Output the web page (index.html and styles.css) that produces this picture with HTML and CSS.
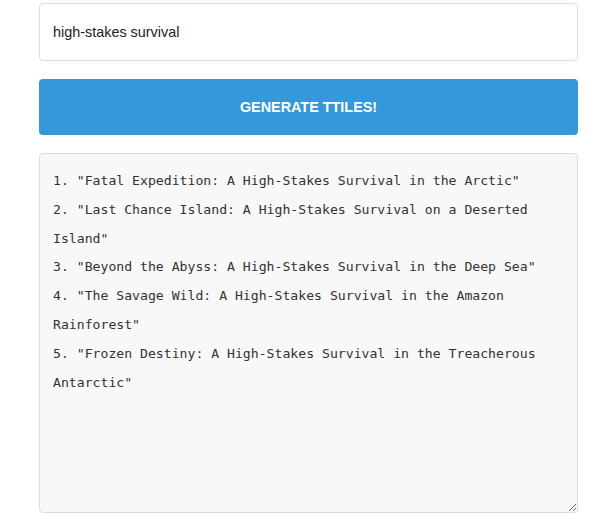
FILE: index.html
```html
<!DOCTYPE html>
<html lang="en">
<head>
  <meta charset="UTF-8" />
  <title>Title Generator</title>
  <link rel="stylesheet" href="styles.css">
</head>
<body>
  <div class="wrap">
    <input type="text" class="topic" value="high-stakes survival" />
    <button class="generate">Generate Ttiles!</button>
    <textarea class="results" readonly>1. "Fatal Expedition: A High-Stakes Survival in the Arctic"
2. "Last Chance Island: A High-Stakes Survival on a Deserted Island"
3. "Beyond the Abyss: A High-Stakes Survival in the Deep Sea"
4. "The Savage Wild: A High-Stakes Survival in the Amazon Rainforest"
5. "Frozen Destiny: A High-Stakes Survival in the Treacherous Antarctic"</textarea>
  </div>
</body>
</html>
```

FILE: styles.css
```css
body {
  margin: 0;
  background-color: #ffffff;
  font-family: "Liberation Sans", Arial, sans-serif;
}
.wrap {
  display: flex;
  flex-direction: column;
  gap: 18px;
  width: 539px;
  padding: 3px 0 0 39px;
}
.topic {
  box-sizing: border-box;
  width: 100%;
  height: 58px;
  padding: 0 13px;
  border: 1px solid #dddddd;
  border-radius: 4px;
  font-family: "Liberation Sans", Arial, sans-serif;
  font-size: 14.4px;
  color: #222222;
  outline: none;
}
.generate {
  box-sizing: border-box;
  width: 100%;
  height: 56px;
  background-color: #3498db;
  color: #ffffff;
  border: none;
  border-radius: 4px;
  font-family: "Liberation Sans", Arial, sans-serif;
  font-size: 14.4px;
  font-weight: bold;
  text-transform: uppercase;
  cursor: pointer;
}
.results {
  box-sizing: border-box;
  width: 100%;
  height: 360px;
  margin: 0;
  padding: 13px 13px;
  background-color: #f8f8f8;
  border: 1px solid #dddddd;
  border-radius: 4px;
  font-family: "DejaVu Sans Mono", "Liberation Mono", monospace;
  font-size: 13.15px;
  line-height: 28.8px;
  color: #333333;
  outline: none;
}
```
